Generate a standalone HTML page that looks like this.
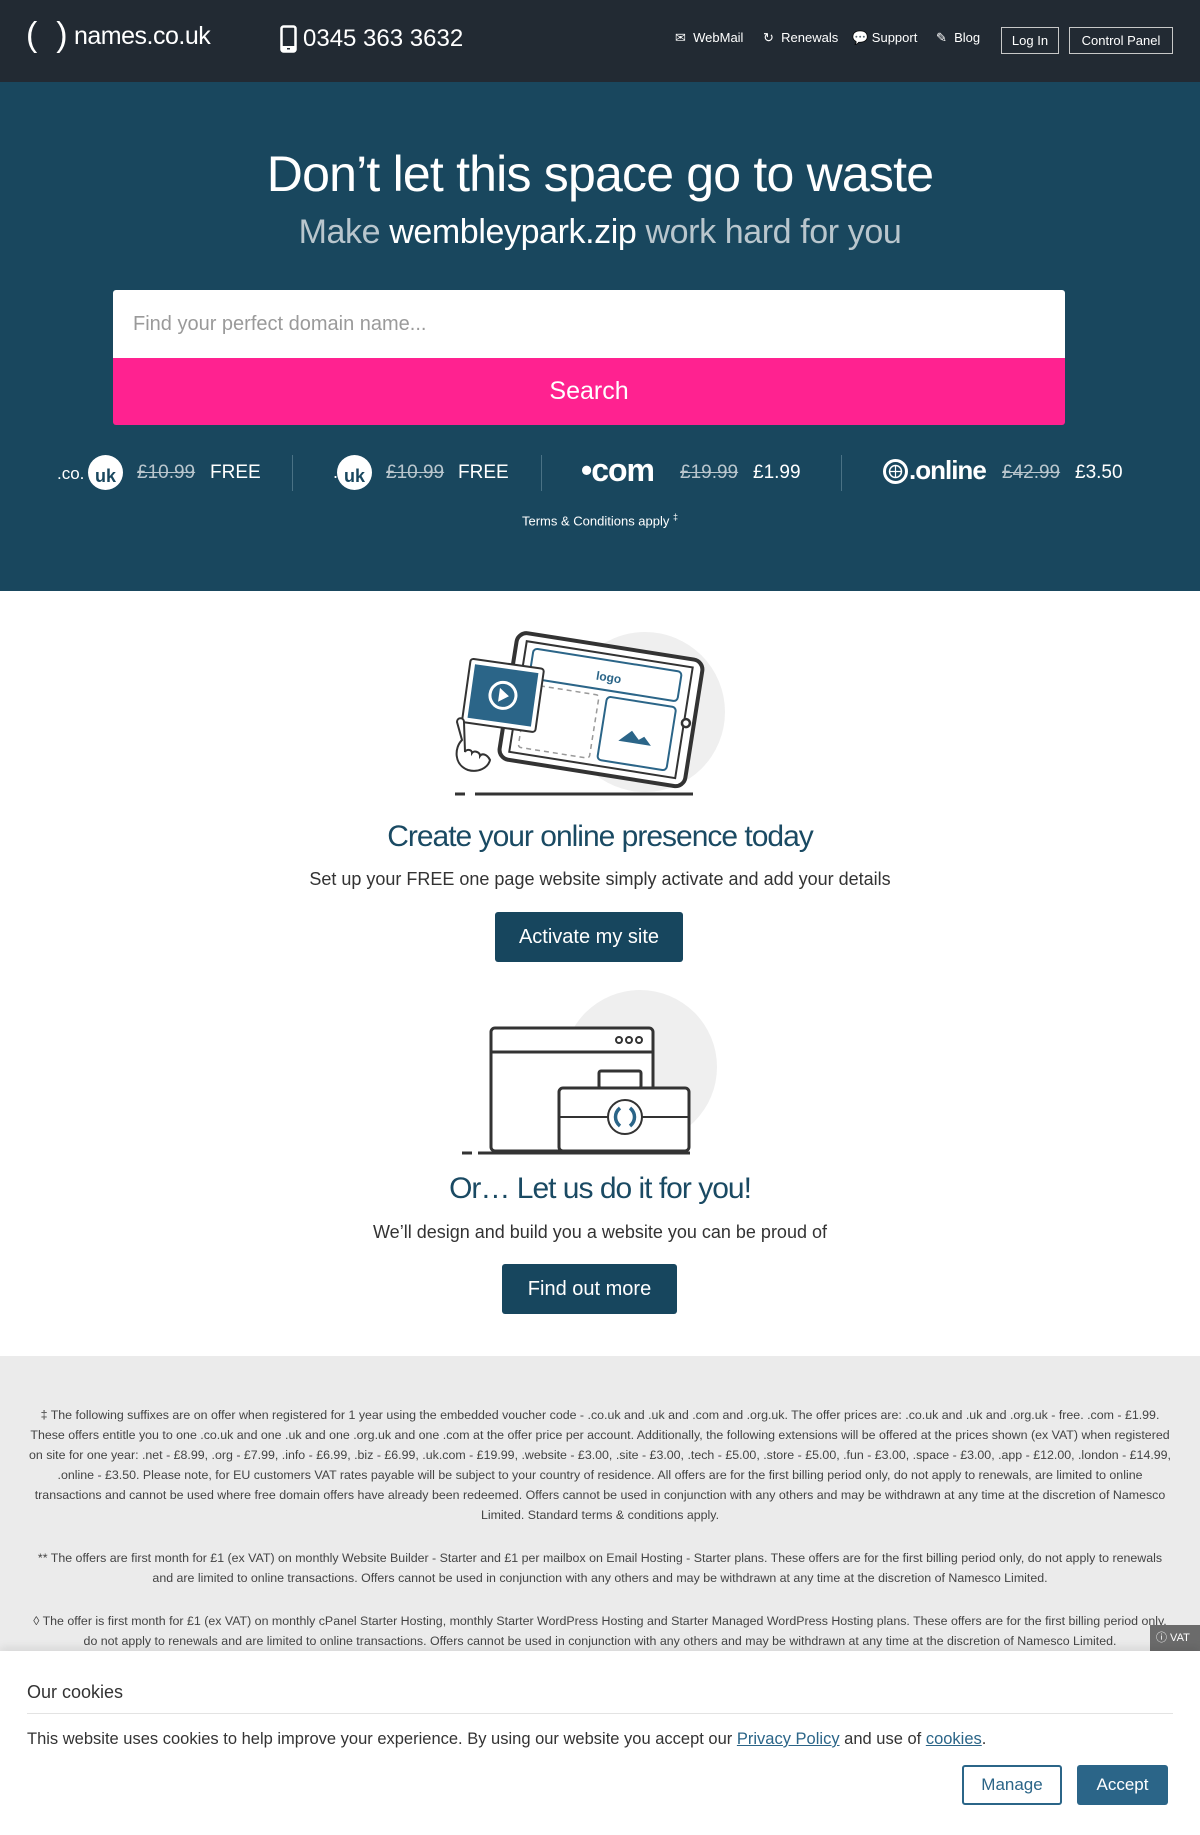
<!DOCTYPE html>
<html><head><meta charset="utf-8"><style>
*{margin:0;padding:0;box-sizing:border-box}
body{width:1200px;height:1835px;overflow:hidden;font-family:"Liberation Sans",sans-serif;background:#fff;position:relative}
.a{position:absolute;white-space:nowrap}
#hdr{position:absolute;left:0;top:0;width:1200px;height:82px;background:#222a33}
#hero{position:absolute;left:0;top:82px;width:1200px;height:509px;background:#19475e}
.nav{color:#fff;font-size:13px;top:30px}
.btn{border:1px solid #c8c8c8;color:#fff;font-size:13px;text-align:center;line-height:25px}
.off{color:#fff;font-size:19px;top:462px}
.st{color:#b9c6cd;text-decoration:line-through}
.div{width:1px;height:36px;background:#4a7285;top:455px}
.c{text-align:center;left:0;width:1200px}
.h2{color:#1a4a63;font-size:30px;letter-spacing:-1px}
.p{color:#333;font-size:18px}
.dbtn{background:#17465e;color:#fff;font-size:20px;text-align:center;border-radius:3px}
#foot{position:absolute;left:0;top:1356px;width:1200px;height:300px;background:#ebebeb}
.fn{position:absolute;left:28px;width:1144px;text-align:center;font-size:12.4px;line-height:20px;color:#444}
#ck{position:absolute;left:0;top:1651px;width:1200px;height:184px;background:#fff;box-shadow:0 -4px 8px rgba(0,0,0,.08)}
</style></head><body>
<div id="hdr"></div>
<div class="a" style="left:26px;top:16px;color:#fff;font-size:34px;font-weight:300">(&nbsp;&nbsp;)</div>
<div class="a" style="left:74px;top:22px;color:#fff;font-size:25px;letter-spacing:-0.5px">names.co.uk</div>
<svg class="a" style="left:280px;top:25px" width="17" height="28" viewBox="0 0 17 28"><rect x="1.5" y="1.5" width="14" height="25" rx="2" fill="none" stroke="#fff" stroke-width="2.5"/><rect x="1.5" y="21" width="14" height="5" fill="#fff"/><rect x="7" y="23" width="3" height="1.5" fill="#222a33"/></svg>
<div class="a" style="left:303px;top:25px;color:#fff;font-size:24px">0345 363 3632</div>
<div class="a nav" style="left:675px">✉&nbsp; WebMail</div>
<div class="a nav" style="left:763px">↻&nbsp; Renewals</div>
<div class="a nav" style="left:852px">💬&nbsp;Support</div>
<div class="a nav" style="left:936px">✎&nbsp; Blog</div>
<div class="a btn" style="left:1001px;top:27px;width:58px;height:27px">Log In</div>
<div class="a btn" style="left:1069px;top:27px;width:104px;height:27px">Control Panel</div>

<div id="hero"></div>
<div class="a c" style="top:145px;color:#fff;font-size:50px;letter-spacing:-0.8px">Don’t let this space go to waste</div>
<div class="a c" style="top:213px;color:#b9c6cd;font-size:34px;letter-spacing:-0.4px">Make <span style="color:#fff">wembleypark.zip</span> work hard for you</div>
<div class="a" style="left:113px;top:290px;width:952px;height:68px;background:#fff;border-radius:3px 3px 0 0"></div>
<div class="a" style="left:133px;top:313px;color:#9a9a9a;font-size:20px">Find your perfect domain name...</div>
<div class="a" style="left:113px;top:358px;width:952px;height:67px;background:#ff2290;border-radius:0 0 3px 3px;color:#fff;font-size:25px;text-align:center;line-height:67px">Search</div>

<div class="a" style="left:57px;top:464px;color:#fff;font-size:17px">.co.</div>
<div class="a" style="left:88px;top:455px;width:35px;height:35px;border-radius:50%;background:#fff;color:#19475e;font-weight:bold;font-size:18px;text-align:center;line-height:42px">uk</div>
<div class="a off st" style="left:137px">£10.99</div>
<div class="a off" style="left:210px">FREE</div>
<div class="a div" style="left:292px"></div>
<div class="a" style="left:337px;top:455px;width:35px;height:35px;border-radius:50%;background:#fff;color:#19475e;font-weight:bold;font-size:18px;text-align:center;line-height:42px">uk</div>
<div class="a" style="left:333px;top:462px;color:#fff;font-size:18px">.</div>
<div class="a off st" style="left:386px">£10.99</div>
<div class="a off" style="left:458px">FREE</div>
<div class="a div" style="left:541px"></div>
<div class="a" style="left:581px;top:452px;color:#fff;font-size:32px;font-weight:bold;letter-spacing:-1px">•com</div>
<div class="a off st" style="left:680px">£19.99</div>
<div class="a off" style="left:753px">£1.99</div>
<div class="a div" style="left:841px"></div>
<svg class="a" style="left:883px;top:459px" width="25" height="27" viewBox="0 0 25 27"><circle cx="12.5" cy="12.5" r="11" fill="none" stroke="#fff" stroke-width="3"/><circle cx="12.5" cy="12.5" r="6" fill="none" stroke="#fff" stroke-width="1.5"/><path d="M6.5 12.5h12M12.5 6.5v12" stroke="#fff" stroke-width="1.2"/></svg>
<div class="a" style="left:909px;top:455px;color:#fff;font-size:26px;font-weight:bold;letter-spacing:-1px">.online</div>
<div class="a off st" style="left:1002px">£42.99</div>
<div class="a off" style="left:1075px">£3.50</div>
<div class="a c" style="top:512px;color:#fff;font-size:13px">Terms &amp; Conditions apply <sup style="font-size:9px">‡</sup></div>

<svg class="a" style="left:440px;top:620px" width="300" height="190" viewBox="0 0 300 190">
<circle cx="205" cy="92" r="80" fill="#efefef"/>
<g transform="rotate(9 150 95)">
<rect x="66" y="24" width="188" height="128" rx="10" fill="#fff" stroke="#333" stroke-width="4"/>
<rect x="76" y="32" width="168" height="112" fill="none" stroke="#333" stroke-width="2"/>
<rect x="84" y="38" width="150" height="30" rx="4" fill="none" stroke="#2b6588" stroke-width="2"/>
<text x="150" y="59" font-size="12" fill="#2b6588" font-weight="bold" font-family="Liberation Sans">logo</text>
<rect x="84" y="74" width="72" height="64" rx="3" fill="none" stroke="#999" stroke-width="1.5" stroke-dasharray="5 4"/>
<rect x="164" y="74" width="70" height="64" rx="4" fill="none" stroke="#2b6588" stroke-width="2"/>
<path d="M182 116l12-12 8 8 5-4 8 8z" fill="#2b6588"/>
<circle cx="246" cy="88" r="4" fill="#fff" stroke="#333" stroke-width="2.5"/>
</g>
<g transform="rotate(8 60 75)">
<rect x="26" y="43" width="74" height="64" rx="3" fill="#fff" stroke="#333" stroke-width="2"/>
<rect x="31" y="48" width="64" height="54" fill="#2b6588"/>
<circle cx="63" cy="75" r="13" fill="none" stroke="#fff" stroke-width="3"/>
<path d="M59 68l10 7-10 7z" fill="#fff"/>
</g>
<path d="M22 120c-8 8-8 25 6 30 10 3 20-2 22-10-3-6-8-7-10-4 0-4-6-6-8-3 0-4-6-4-7-1l-1-30c0-5-7-5-7 0z" fill="#fff" stroke="#333" stroke-width="2"/>
<path d="M15 174h10M35 174h218" stroke="#333" stroke-width="3"/>
</svg>
<div class="a c h2" style="top:820px">Create your online presence today</div>
<div class="a c p" style="top:869px">Set up your FREE one page website simply activate and add your details</div>
<div class="a dbtn" style="left:495px;top:912px;width:188px;height:50px;line-height:50px">Activate my site</div>

<svg class="a" style="left:440px;top:975px" width="300" height="185" viewBox="0 0 300 185">
<circle cx="200" cy="92" r="77" fill="#efefef"/>
<rect x="51" y="53" width="162" height="123" rx="4" fill="#fff" stroke="#333" stroke-width="3"/>
<path d="M51 77h162" stroke="#333" stroke-width="3"/>
<circle cx="179" cy="65" r="3" fill="none" stroke="#333" stroke-width="2"/><circle cx="189" cy="65" r="3" fill="none" stroke="#333" stroke-width="2"/><circle cx="199" cy="65" r="3" fill="none" stroke="#333" stroke-width="2"/>
<rect x="119" y="113" width="130" height="63" rx="4" fill="#fff" stroke="#333" stroke-width="3"/>
<rect x="159" y="96" width="42" height="17" rx="2" fill="none" stroke="#333" stroke-width="3"/>
<path d="M119 142h50M201 142h48" stroke="#333" stroke-width="2"/>
<circle cx="185" cy="142" r="17" fill="#fff" stroke="#333" stroke-width="2"/>
<path d="M180 133c-6 5-6 13 0 18M190 133c6 5 6 13 0 18" fill="none" stroke="#2b6588" stroke-width="3.5"/>
<path d="M22 178h10M38 178h212" stroke="#333" stroke-width="3"/>
</svg>
<div class="a c h2" style="top:1172px">Or… Let us do it for you!</div>
<div class="a c p" style="top:1222px">We’ll design and build you a website you can be proud of</div>
<div class="a dbtn" style="left:502px;top:1264px;width:175px;height:50px;line-height:50px">Find out more</div>

<div id="foot"></div>
<div class="fn" style="top:1405px">‡ The following suffixes are on offer when registered for 1 year using the embedded voucher code - .co.uk and .uk and .com and .org.uk. The offer prices are: .co.uk and .uk and .org.uk - free. .com - £1.99. These offers entitle you to one .co.uk and one .uk and one .org.uk and one .com at the offer price per account. Additionally, the following extensions will be offered at the prices shown (ex VAT) when registered on site for one year: .net - £8.99, .org - £7.99, .info - £6.99, .biz - £6.99, .uk.com - £19.99, .website - £3.00, .site - £3.00, .tech - £5.00, .store - £5.00, .fun - £3.00, .space - £3.00, .app - £12.00, .london - £14.99, .online - £3.50. Please note, for EU customers VAT rates payable will be subject to your country of residence. All offers are for the first billing period only, do not apply to renewals, are limited to online transactions and cannot be used where free domain offers have already been redeemed. Offers cannot be used in conjunction with any others and may be withdrawn at any time at the discretion of Namesco Limited. Standard terms &amp; conditions apply.</div>
<div class="fn" style="top:1548px">** The offers are first month for £1 (ex VAT) on monthly Website Builder - Starter and £1 per mailbox on Email Hosting - Starter plans. These offers are for the first billing period only, do not apply to renewals and are limited to online transactions. Offers cannot be used in conjunction with any others and may be withdrawn at any time at the discretion of Namesco Limited.</div>
<div class="fn" style="top:1611px">◊ The offer is first month for £1 (ex VAT) on monthly cPanel Starter Hosting, monthly Starter WordPress Hosting and Starter Managed WordPress Hosting plans. These offers are for the first billing period only, do not apply to renewals and are limited to online transactions. Offers cannot be used in conjunction with any others and may be withdrawn at any time at the discretion of Namesco Limited.</div>
<div class="a" style="left:1150px;top:1625px;width:50px;height:26px;background:#6b6b6b;color:#fff;font-size:11px;line-height:26px;padding-left:6px">ⓘ VAT</div>

<div id="ck"></div>
<div class="a" style="left:27px;top:1682px;color:#333;font-size:18px">Our cookies</div>
<div class="a" style="left:27px;top:1713px;width:1146px;height:1px;background:#e3e3e3"></div>
<div class="a" style="left:27px;top:1730px;color:#333;font-size:16.5px">This website uses cookies to help improve your experience. By using our website you accept our <span style="color:#2b6588;text-decoration:underline">Privacy Policy</span> and use of <span style="color:#2b6588;text-decoration:underline">cookies</span>.</div>
<div class="a" style="left:962px;top:1765px;width:100px;height:40px;border:2px solid #2b6588;border-radius:3px;color:#2b6588;font-size:17px;text-align:center;line-height:36px">Manage</div>
<div class="a" style="left:1077px;top:1765px;width:91px;height:40px;background:#2b6588;border-radius:3px;color:#fff;font-size:17px;text-align:center;line-height:40px">Accept</div>
</body></html>
